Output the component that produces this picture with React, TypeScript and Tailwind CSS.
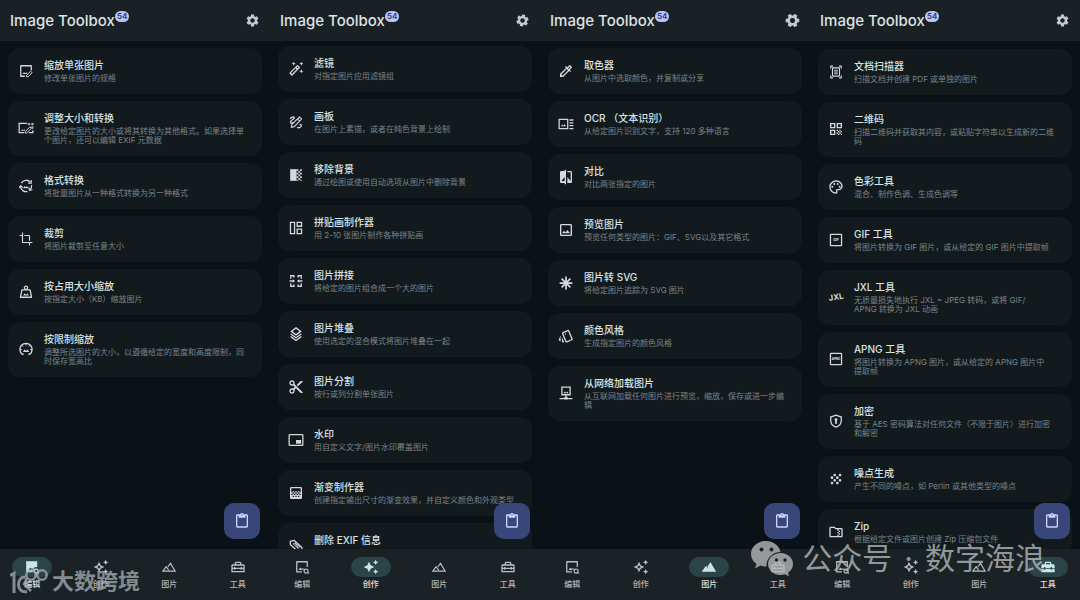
import type { ReactNode } from "react";
import clsx from "clsx";
import {
  MdAutoAwesome,
  MdCompare,
  MdContentCut,
  MdCrop,
  MdGradient,
  MdGrain,
  MdHomeRepairService,
  MdOutlineAutoAwesome,
  MdOutlineAutoFixHigh,
  MdOutlineColorize,
  MdOutlineContentPaste,
  MdOutlineDocumentScanner,
  MdOutlineFolderZip,
  MdOutlineHomeRepairService,
  MdOutlineImage,
  MdOutlinePalette,
  MdOutlineStyle,
  MdQrCode,
  MdSettings,
} from "react-icons/md";

type Tool = { icon: ReactNode; title: string; text: string };

type Screen = {
  tab: number;
  listClass: string;
  gearClass: string;
  tools: Tool[];
};

function Glyph({ children, wide }: { children: ReactNode; wide?: boolean }) {
  return (
    <svg
      viewBox={wide ? "0 0 28 24" : "0 0 24 24"}
      className={wide ? "h-[14px] w-4" : "size-[14px]"}
      fill="none"
      stroke="currentColor"
      strokeWidth="2.200"
      aria-hidden="true"
    >
      {children}
    </svg>
  );
}

const ImageEditIcon = () => (
  <Glyph>
    <path d="M10 21H3V3h18v8" strokeLinejoin="round" />
    <path d="M6 17l2.500-3 2.500 2 2-2 1 3z" fill="currentColor" stroke="none" />
    <path d="M13 22v-3l7-6.500 2.500 2.500-7 7z" strokeWidth="1.700" />
  </Glyph>
);

const ResizeIcon = () => (
  <Glyph wide>
    <path d="M11 20H2V4h14M19 20h7v-4" />
    <path d="M5 17l2.500-3 2 2 2-2 1 3z" fill="currentColor" stroke="none" />
    <path d="M13 21v-3l8-8 2.500 2.500-8 8z" strokeWidth="1.700" />
    <path d="M18 4h2.500v2.500H18zM24 4h2.500v2.500H24zM24 10h2.500v2.500H24z" strokeWidth="1.500" />
  </Glyph>
);

const ConvertIcon = () => (
  <Glyph>
    <path d="M4 7a9.500 9.500 0 0 1 15.500-1.500M21.500 10.500a9.500 9.500 0 0 1-3 8.500M14.500 21.500A9.500 9.500 0 0 1 2.800 13" />
    <path d="M21 1.500v5.500h-5.500M0 15.500l2.800-4 3.700 3.200M17 14.500l1 5 5-1" strokeWidth="2" />
    <path d="M7 16l2.500-4 2 2 2-2 3.500 4z" fill="currentColor" stroke="none" />
  </Glyph>
);

const WeightIcon = () => (
  <Glyph>
    <path d="M5 8.500h14L21.500 21h-19z" strokeLinejoin="round" />
    <circle cx="12" cy="4.800" r="2.800" />
    <path d="M7 18l2.500-4 2.500 2.500L14.500 14l2.500 4z" fill="currentColor" stroke="none" />
  </Glyph>
);

const LimitIcon = () => (
  <Glyph>
    <path d="M8 21H5.500A10.500 10.500 0 1 1 18.500 21H16" />
    <path d="M12 2v4M1.500 13H5M19 13h3.500M5 5.500l2.200 2.200M19 5.500l-2.200 2.200" strokeWidth="1.600" />
    <path d="M6.500 17l3-4 2.500 2.500L14.500 13l3 4z" fill="currentColor" stroke="none" />
  </Glyph>
);

const DrawIcon = () => (
  <Glyph>
    <path d="M2 6.500c4-4.500 7.500-4 7-1.500S2.500 9 2.500 12 6 14.500 8 12.500M14 21c3 2 7 0 7-2.500s-1-2.500-3-1.500" />
    <path d="M4 21l1-5L18 3.500l3.500 3.500L9 20zM15 7l3 3" strokeWidth="1.900" />
  </Glyph>
);

const RemoveBgIcon = () => (
  <Glyph>
    <path d="M2 2h11v20H2z" fill="currentColor" stroke="none" />
    <path
      d="M13 2h3v3h-3zM19 2h3v3h-3zM16 5h3v3h-3zM13 8h3v3h-3zM19 8h3v3h-3zM16 11h3v3h-3zM13 14h3v3h-3zM19 14h3v3h-3zM16 17h3v3h-3zM13 20h3v2h-3zM19 20h3v2h-3z"
      fill="currentColor"
      stroke="none"
    />
  </Glyph>
);

const CollageIcon = () => (
  <Glyph>
    <path d="M2.500 2.500h7v19h-7zM14 2.500h7.500v6.500H14zM14 14h7.500v7.500H14z" />
  </Glyph>
);

const StitchIcon = () => (
  <Glyph>
    <path d="M3 8V3h5.500v3M15.500 6V3H21v5M3 16v5h5.500v-3M15.500 18v3H21v-5" />
    <path d="M1 12h8M23 12h-8" />
    <path d="M6.500 8.500L10 12l-3.500 3.500zM17.500 8.500L14 12l3.500 3.500z" fill="currentColor" stroke="none" />
  </Glyph>
);

const StackIcon = () => (
  <Glyph>
    <path d="M12 1.500L20 7.500l-8 6-8-6z" />
    <path d="M3 12l9 6.500 9-6.500M3 16.500L12 23l9-6.500" />
  </Glyph>
);

const WatermarkIcon = () => (
  <Glyph wide>
    <rect x="2" y="2.500" width="24" height="19" rx="1" />
    <path d="M14 12h9v6.500h-9z" fill="currentColor" stroke="none" />
  </Glyph>
);

const ExifIcon = () => (
  <Glyph>
    <path d="M2 4l7-1.500 13 12c1 4-2 7-6 7L2.500 10z" strokeLinejoin="round" />
    <path d="M7.500 7.500l9 9M10.500 6.500l8 8" strokeWidth="2.600" strokeDasharray="2 1" />
  </Glyph>
);

const OcrIcon = () => (
  <Glyph wide>
    <path d="M2 4h15v16H2zM20 5h7M20 10h7M20 15h7M20 20h7" />
    <path d="M5 16l2.500-3 2 2 2-3 2.500 4z" fill="currentColor" stroke="none" />
  </Glyph>
);

const AsteriskIcon = () => (
  <Glyph>
    <path d="M12 1v22M1 12h22M4.500 4.500l15 15M19.500 4.500l-15 15" strokeWidth="3" />
  </Glyph>
);

const WebImageIcon = () => (
  <Glyph>
    <path d="M5 2h14v13H5zM12 15v6M1 21.500h22" />
    <path d="M7.500 12.500l2.500-3 2 2 2-2 2.500 3z" fill="currentColor" stroke="none" />
    <path d="M9 19h6v4H9z" fill="currentColor" stroke="none" />
  </Glyph>
);

const FormatIcon = ({ label }: { label: string }) => (
  <Glyph>
    <rect x="2.500" y="2.500" width="19" height="19" rx="1" />
    <text
      x="12"
      y="14"
      textAnchor="middle"
      fontSize={label.length > 3 ? 5 : 6}
      fontWeight="800"
      fontFamily="Inter, sans-serif"
      fill="currentColor"
      stroke="none"
    >
      {label}
    </text>
  </Glyph>
);

const JxlIcon = () => (
  <Glyph wide>
    <text
      x="14"
      y="17"
      textAnchor="middle"
      fontSize="14"
      fontWeight="700"
      fontFamily="Inter, sans-serif"
      fill="currentColor"
      stroke="none"
      transform="rotate(-10 14 12)"
    >
      JXL
    </text>
  </Glyph>
);

const ShieldIcon = () => (
  <Glyph>
    <path d="M12 2l9 3.200V11c0 5.500-3.500 9.500-9 11.500C6.500 20.500 3 16.500 3 11V5.200z" />
    <circle cx="12" cy="9.500" r="2.400" fill="currentColor" stroke="none" />
    <path d="M10.800 10h2.400l.6 6.500h-3.600z" fill="currentColor" stroke="none" />
  </Glyph>
);

const EditTabIcon = ({ active }: { active?: boolean }) => (
  <Glyph>
    {active ? (
      <path d="M2 2h19v10a7 7 0 0 0-8 9H2z" fill="currentColor" stroke="none" />
    ) : (
      <path d="M12 20.500H3V3h18v9" strokeLinejoin="round" />
    )}
    <path
      d="M6 17l3-4 2 2 2-1.500v3.500z"
      fill={active ? "#2b4447" : "currentColor"}
      stroke="none"
    />
    <circle cx="19" cy="19" r="3.500" strokeWidth="1.800" />
    <path d="M15 14v3h3M23 24v-3h-3" strokeWidth="1.300" />
  </Glyph>
);

const MountainIcon = ({ active }: { active?: boolean }) => (
  <Glyph>
    <path
      d="M10 12l4.500-6.500L22.500 19h-21L7 11.500l4.500 6"
      fill={active ? "currentColor" : "none"}
      strokeWidth="2"
    />
  </Glyph>
);

const screens: Screen[] = [
  {
    tab: 0,
    listClass: "pt-[7px]",
    gearClass: "size-[15px]",
    tools: [
      { icon: <ImageEditIcon />, title: "缩放单张图片", text: "修改单张图片的规格" },
      {
        icon: <ResizeIcon />,
        title: "调整大小和转换",
        text: "更改给定图片的大小或将其转换为其他格式。如果选择单\n个图片，还可以编辑 EXIF 元数据",
      },
      { icon: <ConvertIcon />, title: "格式转换", text: "将批量图片从一种格式转换为另一种格式" },
      { icon: <MdCrop className="size-[14px]" />, title: "裁剪", text: "将图片裁剪至任意大小" },
      { icon: <WeightIcon />, title: "按占用大小缩放", text: "按指定大小（KB）缩放图片" },
      {
        icon: <LimitIcon />,
        title: "按限制缩放",
        text: "调整所选图片的大小，以遵循给定的宽度和高度限制，同\n时保存宽高比",
      },
    ],
  },
  {
    tab: 1,
    listClass: "pt-[5px]",
    gearClass: "size-[15px] rotate-12",
    tools: [
      { icon: <MdOutlineAutoFixHigh />, title: "滤镜", text: "对指定图片应用滤镜组" },
      { icon: <DrawIcon />, title: "画板", text: "在图片上素描，或者在纯色背景上绘制" },
      { icon: <RemoveBgIcon />, title: "移除背景", text: "通过绘图或使用自动选项从图片中删除背景" },
      { icon: <CollageIcon />, title: "拼贴画制作器", text: "用 2-10 张图片制作各种拼贴画" },
      { icon: <StitchIcon />, title: "图片拼接", text: "将给定的图片组合成一个大的图片" },
      { icon: <StackIcon />, title: "图片堆叠", text: "使用选定的混合模式将图片堆叠在一起" },
      { icon: <MdContentCut />, title: "图片分割", text: "按行或列分割单张图片" },
      { icon: <WatermarkIcon />, title: "水印", text: "用自定义文字/图片水印覆盖图片" },
      { icon: <MdGradient />, title: "渐变制作器", text: "创建指定输出尺寸的渐变效果，并自定义颜色和外观类型" },
      { icon: <ExifIcon />, title: "删除 EXIF 信息", text: "\u00a0" },
    ],
  },
  {
    tab: 2,
    listClass: "pt-[7px]",
    gearClass: "size-[17px] rotate-[30deg]",
    tools: [
      { icon: <MdOutlineColorize />, title: "取色器", text: "从图片中选取颜色，并复制或分享" },
      { icon: <OcrIcon />, title: "OCR （文本识别）", text: "从给定图片识别文字，支持 120 多种语言" },
      { icon: <MdCompare />, title: "对比", text: "对比两张指定的图片" },
      { icon: <MdOutlineImage />, title: "预览图片", text: "预览任何类型的图片：GIF、SVG以及其它格式" },
      { icon: <AsteriskIcon />, title: "图片转 SVG", text: "将给定图片追踪为 SVG 图片" },
      { icon: <MdOutlineStyle />, title: "颜色风格", text: "生成指定图片的颜色风格" },
      {
        icon: <WebImageIcon />,
        title: "从网络加载图片",
        text: "从互联网加载任何图片进行预览，缩放，保存或进一步编\n辑",
      },
    ],
  },
  {
    tab: 3,
    listClass: "pt-2",
    gearClass: "size-[15px]",
    tools: [
      {
        icon: <MdOutlineDocumentScanner className="size-[14px]" />,
        title: "文档扫描器",
        text: "扫描文档并创建 PDF 或单独的图片",
      },
      {
        icon: <MdQrCode />,
        title: "二维码",
        text: "扫描二维码并获取其内容，或粘贴字符串以生成新的二维\n码",
      },
      { icon: <MdOutlinePalette />, title: "色彩工具", text: "混合、制作色调、生成色调等" },
      { icon: <FormatIcon label="GIF" />, title: "GIF 工具", text: "将图片转换为 GIF 图片，或从给定的 GIF 图片中提取帧" },
      {
        icon: <JxlIcon />,
        title: "JXL 工具",
        text: "无质量损失地执行 JXL ~ JPEG 转码，或将 GIF/\nAPNG 转换为 JXL 动画",
      },
      {
        icon: <FormatIcon label="APNG" />,
        title: "APNG 工具",
        text: "将图片转换为 APNG 图片，或从给定的 APNG 图片中\n提取帧",
      },
      {
        icon: <ShieldIcon />,
        title: "加密",
        text: "基于 AES 密码算法对任何文件（不限于图片）进行加密\n和解密",
      },
      { icon: <MdGrain />, title: "噪点生成", text: "产生不同的噪点，如 Perlin 或其他类型的噪点" },
      { icon: <MdOutlineFolderZip />, title: "Zip", text: "根据给定文件或图片创建 Zip 压缩包文件" },
    ],
  },
];

const tabs = [
  { label: "编辑", icon: <EditTabIcon />, activeIcon: <EditTabIcon active /> },
  { label: "创作", icon: <MdOutlineAutoAwesome />, activeIcon: <MdAutoAwesome /> },
  { label: "图片", icon: <MountainIcon />, activeIcon: <MountainIcon active /> },
  { label: "工具", icon: <MdOutlineHomeRepairService />, activeIcon: <MdHomeRepairService /> },
];

function TopBar({ gearClass }: { gearClass: string }) {
  return (
    <header className="flex h-[41px] shrink-0 items-center justify-between bg-[#1a2125] px-[10px]">
      <h1 className="flex items-start text-[15px] font-medium leading-5 text-[#dde3e6]">
        Image Toolbox
        <span className="rounded-full bg-[#b8c3fa] px-[2px] text-[8px] font-semibold leading-[11px] text-[#2c3970]">
          54
        </span>
      </h1>
      <button type="button" aria-label="设置" className="flex size-4 items-center justify-center text-[#c3c9cd]">
        <MdSettings className={clsx("shrink-0", gearClass)} />
      </button>
    </header>
  );
}

function ToolCard({ icon, title, text }: Tool) {
  return (
    <li>
      <button
        type="button"
        className="flex w-full items-center rounded-xl bg-[#121a1e] pb-[11px] pl-[9px] pr-3 pt-[10px] text-left"
      >
        <span className="flex w-[18px] shrink-0 justify-center text-base text-[#d3dadc]">{icon}</span>
        <span className="ml-[9px] flex min-w-0 flex-col gap-[2px]">
          <span className="text-[10px] font-medium leading-[14px] text-[#dbe2e3]">{title}</span>
          <span className="whitespace-pre text-[8px] leading-[9px] text-[#7b8487]">{text}</span>
        </span>
      </button>
    </li>
  );
}

function BottomNav({ active }: { active: number }) {
  return (
    <nav className="flex h-[51px] shrink-0 gap-1 bg-[#1a2226] pt-2">
      {tabs.map((tab, i) => (
        <button key={tab.label} type="button" className="flex flex-1 flex-col items-center gap-[2px]">
          <span
            className={clsx(
              "flex h-5 w-10 items-center justify-center rounded-full text-base",
              i === active ? "bg-[#2b4447] text-[#cbe6ea]" : "text-[#b9c1c5]",
            )}
          >
            {i === active ? tab.activeIcon : tab.icon}
          </span>
          <span
            className={clsx(
              "text-[8px] font-medium leading-[11px]",
              i === active ? "text-[#dde4e6]" : "text-[#b0b8bc]",
            )}
          >
            {tab.label}
          </span>
        </button>
      ))}
    </nav>
  );
}

function Phone({ tab, listClass, gearClass, tools }: Screen) {
  return (
    <section className="flex min-h-0 min-w-0 flex-col">
      <TopBar gearClass={gearClass} />
      <div className="relative min-h-0 flex-1 overflow-hidden">
        <ul className={clsx("flex flex-col gap-[7px] px-2", listClass)}>
          {tools.map((tool) => (
            <ToolCard key={tool.title} {...tool} />
          ))}
        </ul>
        <button
          type="button"
          aria-label="粘贴"
          className="absolute bottom-[10px] right-[10px] flex size-9 items-center justify-center rounded-[10px] bg-[#39467a] text-base text-[#ccd4ff]"
        >
          <MdOutlineContentPaste />
        </button>
      </div>
      <BottomNav active={tab} />
    </section>
  );
}

function LeftMark() {
  return (
    <div className="pointer-events-none absolute bottom-[5px] left-[10px] flex items-center gap-1 text-[#a9afb1]/75">
      <svg viewBox="0 0 38 26" className="h-[26px] w-[38px]" fill="none" stroke="currentColor" strokeWidth="3">
        <path d="M0 7.500l4-2V25" />
        <path d="M15.500 9.500C11 8.500 8.500 12 8.500 16.500s3 8 8.500 7" />
        <circle cx="21" cy="7" r="4.700" strokeWidth="2.500" />
        <circle cx="32" cy="7" r="4.700" strokeWidth="2.500" />
        <path d="M17 10l-3 6 7 7" strokeWidth="2.500" />
      </svg>
      <span className="text-[22px] font-bold leading-7">大数跨境</span>
    </div>
  );
}

function RightMark() {
  return (
    <div className="pointer-events-none absolute bottom-6 right-[35px] flex items-center gap-[9px] text-[#b4b8ba]/80">
      <svg viewBox="0 0 42 36" className="h-9 w-[42px]">
        <path
          d="M15 1C7 1 0 6.500 0 14c0 4 2 7.500 5.500 10L4 28.500l5.500-3c2 .7 4 1 6 1C15 19 21 12 29.500 12 28 5 22 1 15 1z"
          fill="currentColor"
        />
        <path
          d="M29.500 13C22.500 13 17 18 17 24s5.500 11 12.500 11c1.500 0 3-.3 4.500-.7l4 2-1-3.500c3-2 5-5 5-8.800C42 18 36.500 13 29.500 13z"
          fill="currentColor"
        />
        <g fill="#172024">
          <circle cx="10.500" cy="9.500" r="2" />
          <circle cx="20.500" cy="9.500" r="2" />
          <circle cx="25.500" cy="20" r="1.700" />
          <circle cx="34" cy="20" r="1.700" />
        </g>
      </svg>
      <span className="flex gap-3 text-[30px] leading-9">
        <span>公众号</span>
        <span>·</span>
        <span>数字海浪</span>
      </span>
    </div>
  );
}

export default function App() {
  return (
    <main
      lang="zh-CN"
      className="relative grid h-screen grid-cols-4 overflow-hidden bg-[#0a1218] font-[Inter,'Noto_Sans_CJK_SC',sans-serif]"
    >
      {screens.map((screen) => (
        <Phone key={screen.tab} {...screen} />
      ))}
      <LeftMark />
      <RightMark />
    </main>
  );
}
